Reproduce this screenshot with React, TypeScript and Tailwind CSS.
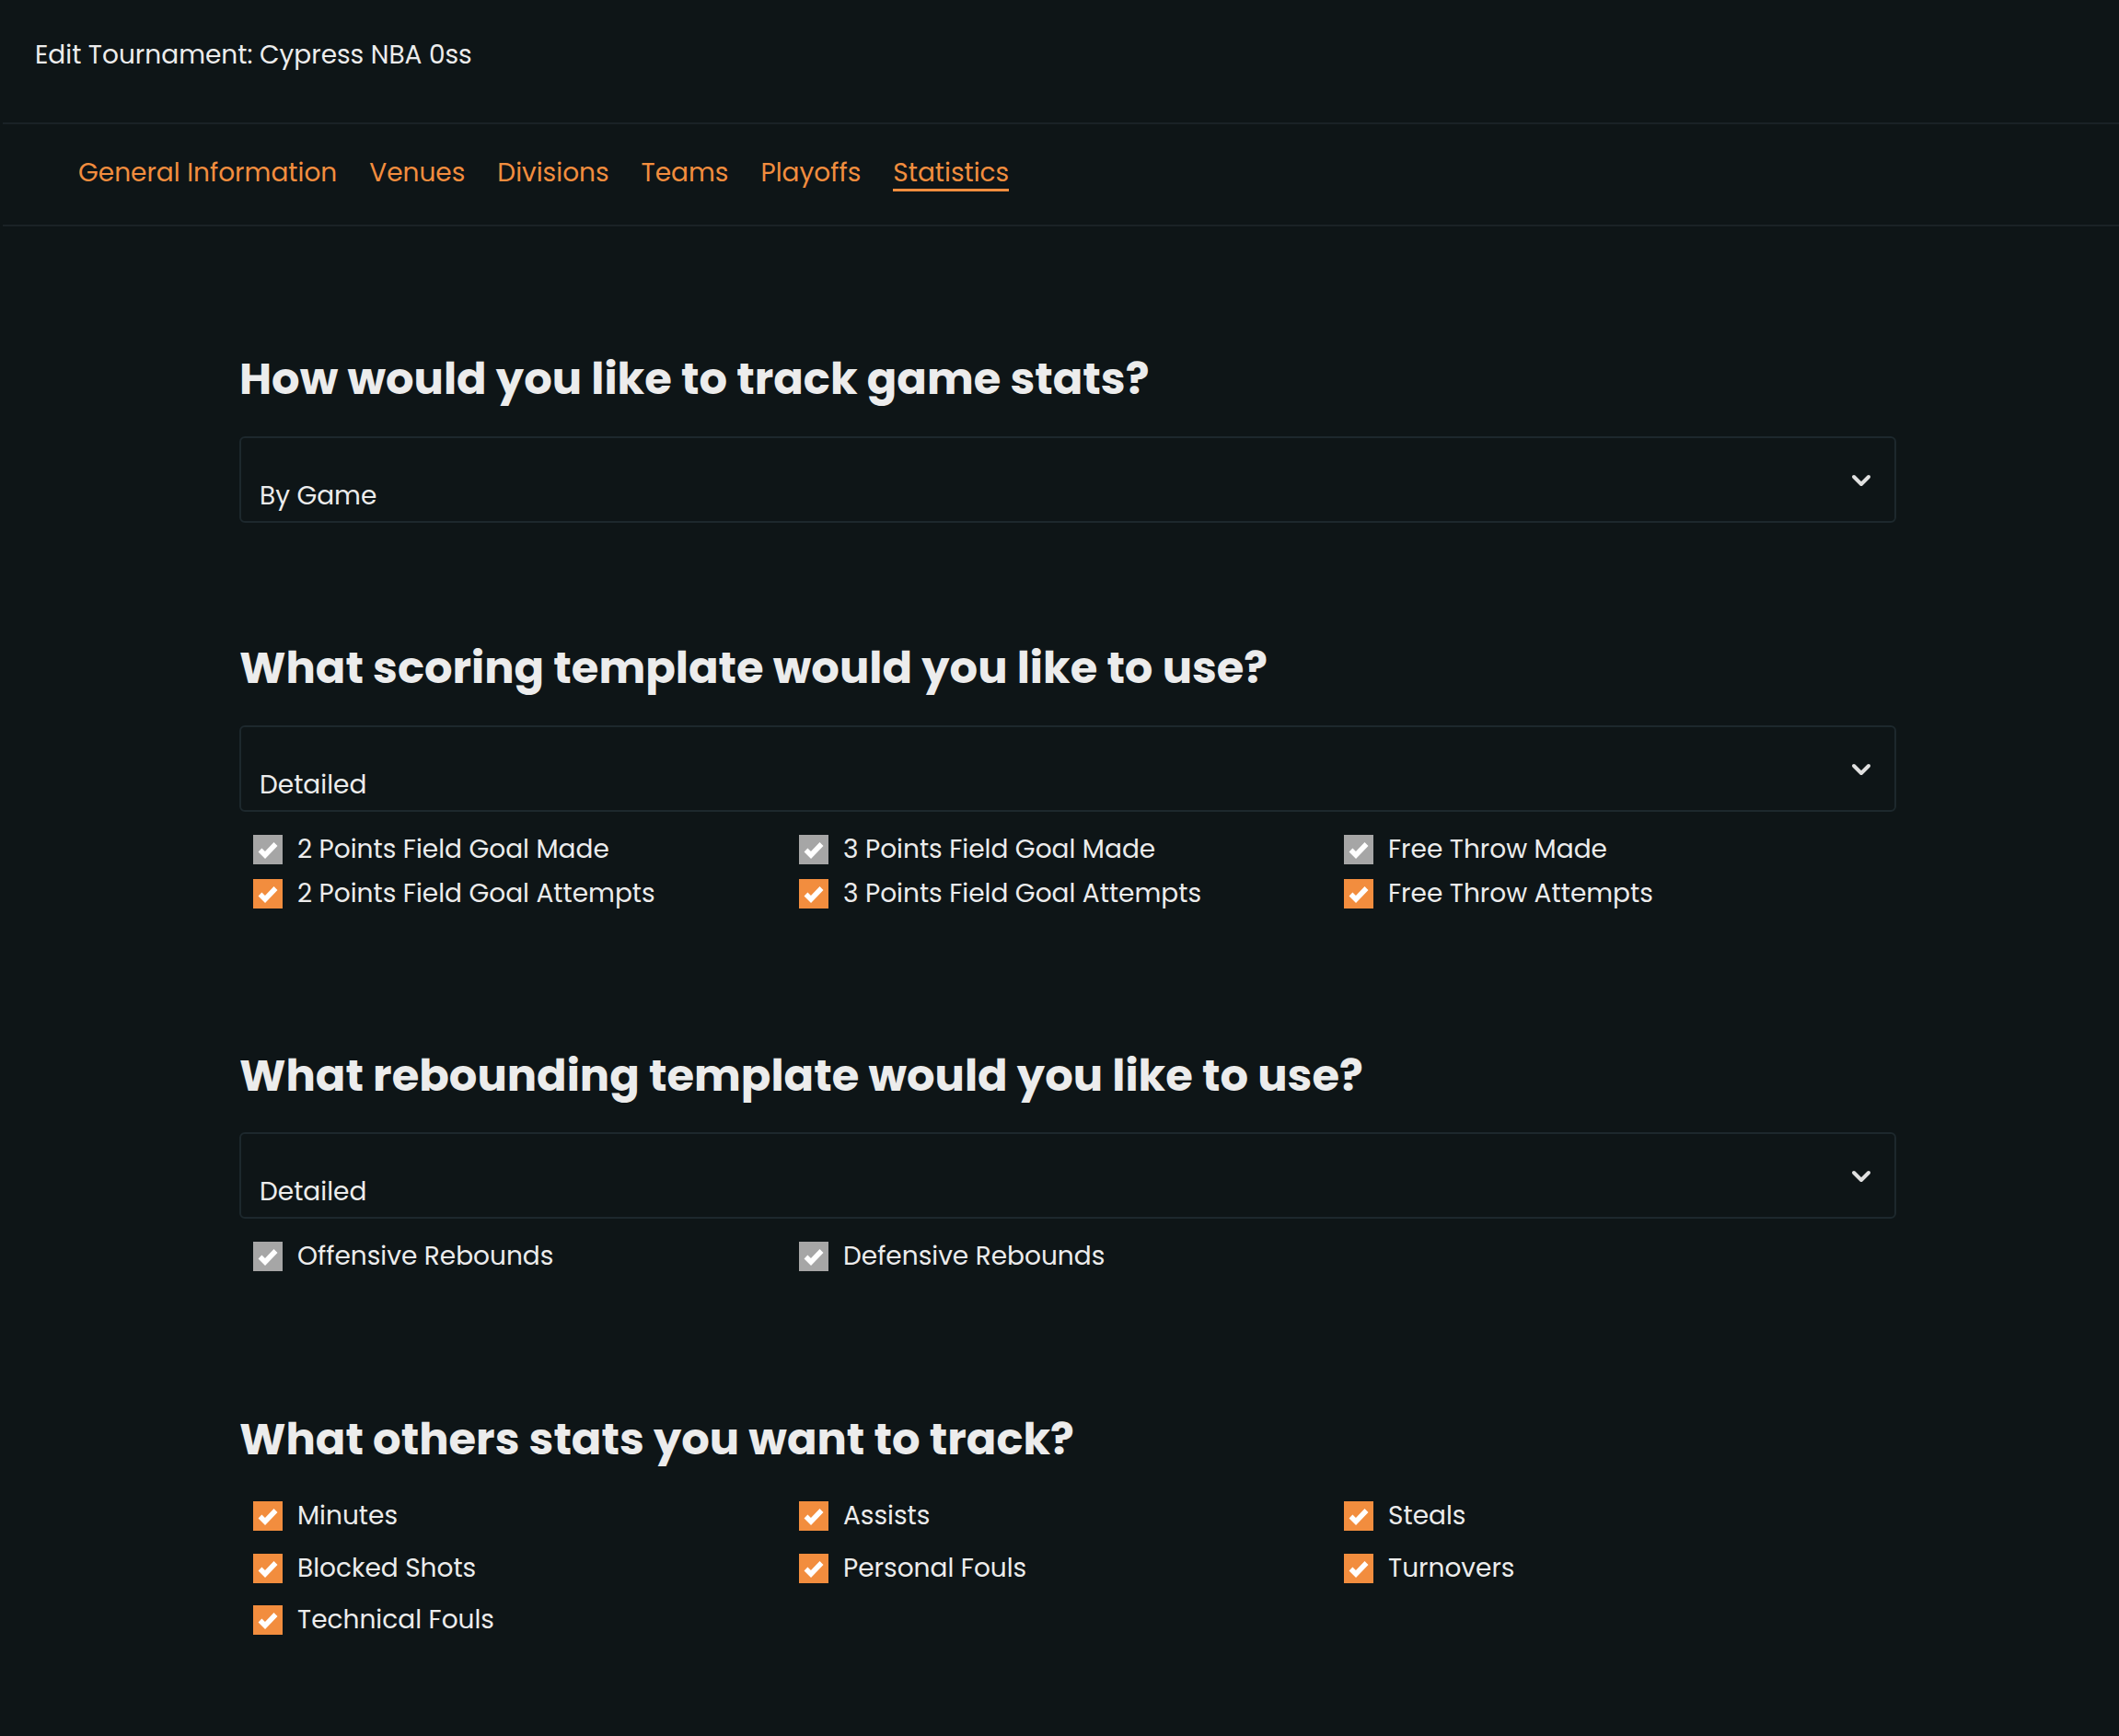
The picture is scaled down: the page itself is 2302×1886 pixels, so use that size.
import { ChevronDown } from 'lucide-react';

const tabs = ['General Information', 'Venues', 'Divisions', 'Teams', 'Playoffs', 'Statistics'];

const scoring = [
  { label: '2 Points Field Goal Made', locked: true },
  { label: '3 Points Field Goal Made', locked: true },
  { label: 'Free Throw Made', locked: true },
  { label: '2 Points Field Goal Attempts', locked: false },
  { label: '3 Points Field Goal Attempts', locked: false },
  { label: 'Free Throw Attempts', locked: false },
];

const rebounding = [
  { label: 'Offensive Rebounds', locked: true },
  { label: 'Defensive Rebounds', locked: true },
];

const others = [
  { label: 'Minutes', locked: false },
  { label: 'Assists', locked: false },
  { label: 'Steals', locked: false },
  { label: 'Blocked Shots', locked: false },
  { label: 'Personal Fouls', locked: false },
  { label: 'Turnovers', locked: false },
  { label: 'Technical Fouls', locked: false },
];

function CheckItem({ label, locked }: { label: string; locked: boolean }) {
  return (
    <label className="flex h-8 items-center gap-4 text-[28px] leading-8 text-[#ececec]">
      <span
        className={`flex h-8 w-8 shrink-0 items-center justify-center ${locked ? 'bg-[#a6a6a6]' : 'bg-[#f28d3e]'}`}
      >
        <svg viewBox="0 0 32 32" className="h-8 w-8">
          <path d="M7.5 16.5 L13 22 L24.5 10" fill="none" stroke="#ffffff" strokeWidth="5.5" strokeLinejoin="miter" />
        </svg>
      </span>
      <span>{label}</span>
    </label>
  );
}

function SelectBox({ value }: { value: string }) {
  return (
    <div className="relative h-[94px] rounded-md border-2 border-[#1d282d]">
      <span className="absolute bottom-[13px] left-[20px] text-[28px] leading-none text-[#ececec]">{value}</span>
      <ChevronDown className="absolute right-[20px] top-[30px] h-8 w-8 text-[#e0e0e0]" strokeWidth={3} />
    </div>
  );
}

function Heading({ children }: { children: string }) {
  return <h2 className="text-[48px] font-bold leading-[58px] text-[#ececec]">{children}</h2>;
}

export default function App() {
  return (
    <div className="min-h-screen bg-[#0e1517] font-['Poppins','Inter',sans-serif]">
      <header className="flex h-[133px] items-center px-[38px] pb-[14px] text-[28px] text-[#ececec]">
        Edit Tournament: Cypress NBA 0ss
      </header>
      <div className="ml-[3px] border-t-2 border-[#1a2226]" />
      <nav className="flex h-[109px] items-center gap-[35px] pl-[85px] text-[28px] text-[#f28d3e]">
        {tabs.map((tab) => (
          <span
            key={tab}
            className={`border-b-[3px] leading-[34px] ${tab === 'Statistics' ? 'border-[#f28d3e]' : 'border-transparent'}`}
          >
            {tab}
          </span>
        ))}
      </nav>
      <div className="ml-[3px] border-t-2 border-[#1a2226]" />

      <main className="ml-[260px] w-[1800px] pb-[100px] pt-[137px]">
        <section className="flex flex-col gap-[33px]">
          <Heading>How would you like to track game stats?</Heading>
          <SelectBox value="By Game" />
        </section>

        <section className="mt-[129px] flex flex-col">
          <Heading>What scoring template would you like to use?</Heading>
          <div className="mt-[33px]">
            <SelectBox value="Detailed" />
          </div>
          <div className="mt-[25px] grid grid-cols-[593px_592px_1fr] gap-y-4 pl-[15px]">
            {scoring.map((item) => (
              <CheckItem key={item.label} label={item.label} locked={item.locked} />
            ))}
          </div>
        </section>

        <section className="mt-[153px] flex flex-col">
          <Heading>What rebounding template would you like to use?</Heading>
          <div className="mt-[32px]">
            <SelectBox value="Detailed" />
          </div>
          <div className="mt-[25px] grid grid-cols-[593px_592px_1fr] pl-[15px]">
            {rebounding.map((item) => (
              <CheckItem key={item.label} label={item.label} locked={item.locked} />
            ))}
          </div>
        </section>

        <section className="mt-[154px] flex flex-col">
          <Heading>What others stats you want to track?</Heading>
          <div className="mt-[38px] grid grid-cols-[593px_592px_1fr] gap-y-[24.5px] pl-[15px]">
            {others.map((item) => (
              <CheckItem key={item.label} label={item.label} locked={item.locked} />
            ))}
          </div>
        </section>
      </main>
    </div>
  );
}
